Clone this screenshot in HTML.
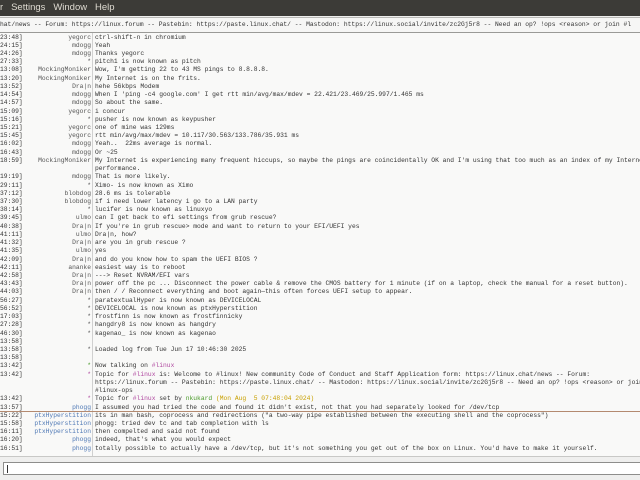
<!DOCTYPE html>
<html><head><meta charset="utf-8">
<style>
html,body{margin:0;padding:0;width:640px;height:480px;overflow:hidden;background:#efefee;font-family:"Liberation Sans",sans-serif;}
#menu{position:absolute;left:0;top:0;width:640px;height:16px;background:#3c3b37;color:#dfdbd2;font-size:9.5px;line-height:16px;white-space:pre;}
#topic{position:absolute;left:0;top:17px;width:640px;height:14px;background:#f6f6f5;border-top:1px solid #b9b9b6;border-bottom:1px solid #9a9a97;font-family:"Liberation Mono",monospace;font-size:6.3px;line-height:14px;color:#333;white-space:pre;overflow:hidden;}
#chat{position:absolute;left:0;top:33px;width:640px;height:423px;background:#f9f9f8;overflow:hidden;border-bottom:1px solid #c8c8c6;}
#sep{position:absolute;left:92px;top:0;width:1px;height:423px;background:#d0d0d0;}
.r{position:absolute;left:0;height:8.22px;width:640px;font-family:"Liberation Mono",monospace;font-size:6.3px;line-height:8.22px;white-space:pre;color:#333;}
.t{position:absolute;left:0;}
.n{position:absolute;right:549px;text-align:right;color:#555;}
.m{position:absolute;left:95px;}
.b{color:#4e78b5}
.g{color:#4a9a2a}
.p{color:#b04aa0}
.y{color:#c8a000}
#marker{position:absolute;left:0;top:377.5px;width:640px;height:1px;background:#b48a70;}
#input{position:absolute;left:3px;top:462px;width:640px;height:13px;background:#fff;border:1px solid #8e8e8c;box-sizing:border-box;}
#caret{position:absolute;left:3px;top:2px;width:1px;height:8px;background:#333;}
</style></head><body>
<div id="menu">r   Settings   Window   Help</div>
<div id="topic">hat/news -- Forum: https://linux.forum -- Pastebin: https://paste.linux.chat/ -- Mastodon: https://linux.social/invite/zc2Gj5r8 -- Need an op? !ops &lt;reason&gt; or join #l</div>
<div id="chat">
<div id="sep"></div>
<div class="r" style="top:0.6px"><span class="t">23:48]</span><span class="n">yegorc</span><span class="m">ctrl-shift-n in chromium</span></div>
<div class="r" style="top:8.82px"><span class="t">24:15]</span><span class="n">mdogg</span><span class="m">Yeah</span></div>
<div class="r" style="top:17.04px"><span class="t">24:26]</span><span class="n">mdogg</span><span class="m">Thanks yegorc</span></div>
<div class="r" style="top:25.26px"><span class="t">27:33]</span><span class="n">*</span><span class="m">pitch1 is now known as pitch</span></div>
<div class="r" style="top:33.48px"><span class="t">13:08]</span><span class="n">MockingMoniker</span><span class="m">Wow, I'm getting 22 to 43 MS pings to 8.8.8.8.</span></div>
<div class="r" style="top:41.7px"><span class="t">13:20]</span><span class="n">MockingMoniker</span><span class="m">My Internet is on the frits.</span></div>
<div class="r" style="top:49.92px"><span class="t">13:52]</span><span class="n">Dra|n</span><span class="m">hehe 56kbps Modem</span></div>
<div class="r" style="top:58.14px"><span class="t">14:54]</span><span class="n">mdogg</span><span class="m">When I 'ping -c4 google.com' I get rtt min/avg/max/mdev = 22.421/23.469/25.997/1.465 ms</span></div>
<div class="r" style="top:66.36px"><span class="t">14:57]</span><span class="n">mdogg</span><span class="m">So about the same.</span></div>
<div class="r" style="top:74.58px"><span class="t">15:09]</span><span class="n">yegorc</span><span class="m">i concur</span></div>
<div class="r" style="top:82.8px"><span class="t">15:16]</span><span class="n">*</span><span class="m">pusher is now known as keypusher</span></div>
<div class="r" style="top:91.02px"><span class="t">15:21]</span><span class="n">yegorc</span><span class="m">one of mine was 129ms</span></div>
<div class="r" style="top:99.24px"><span class="t">15:45]</span><span class="n">yegorc</span><span class="m">rtt min/avg/max/mdev = 10.117/30.563/133.786/35.931 ms</span></div>
<div class="r" style="top:107.46px"><span class="t">16:02]</span><span class="n">mdogg</span><span class="m">Yeah..  22ms average is normal.</span></div>
<div class="r" style="top:115.68px"><span class="t">16:43]</span><span class="n">mdogg</span><span class="m">Or ~25</span></div>
<div class="r" style="top:123.9px"><span class="t">18:59]</span><span class="n">MockingMoniker</span><span class="m">My Internet is experiencing many frequent hiccups, so maybe the pings are coincidentally OK and I'm using that too much as an index of my Internet</span></div>
<div class="r" style="top:132.12px"><span class="m">performance.</span></div>
<div class="r" style="top:140.34px"><span class="t">19:19]</span><span class="n">mdogg</span><span class="m">That is more likely.</span></div>
<div class="r" style="top:148.56px"><span class="t">29:11]</span><span class="n">*</span><span class="m">Ximo- is now known as Ximo</span></div>
<div class="r" style="top:156.78px"><span class="t">37:12]</span><span class="n">blobdog</span><span class="m">28.6 ms is tolerable</span></div>
<div class="r" style="top:165px"><span class="t">37:30]</span><span class="n">blobdog</span><span class="m">if i need lower latency i go to a LAN party</span></div>
<div class="r" style="top:173.22px"><span class="t">38:14]</span><span class="n">*</span><span class="m">lucifer is now known as linuxyo</span></div>
<div class="r" style="top:181.44px"><span class="t">39:45]</span><span class="n">ulmo</span><span class="m">can I get back to efi settings from grub rescue?</span></div>
<div class="r" style="top:189.66px"><span class="t">40:38]</span><span class="n">Dra|n</span><span class="m">If you're in grub rescue&gt; mode and want to return to your EFI/UEFI yes</span></div>
<div class="r" style="top:197.88px"><span class="t">41:11]</span><span class="n">ulmo</span><span class="m">Dra|n, how?</span></div>
<div class="r" style="top:206.1px"><span class="t">41:32]</span><span class="n">Dra|n</span><span class="m">are you in grub rescue ?</span></div>
<div class="r" style="top:214.32px"><span class="t">41:35]</span><span class="n">ulmo</span><span class="m">yes</span></div>
<div class="r" style="top:222.54px"><span class="t">42:09]</span><span class="n">Dra|n</span><span class="m">and do you know how to spam the UEFI BIOS ?</span></div>
<div class="r" style="top:230.76px"><span class="t">42:11]</span><span class="n">ananke</span><span class="m">easiest way is to reboot</span></div>
<div class="r" style="top:238.98px"><span class="t">42:58]</span><span class="n">Dra|n</span><span class="m">---&gt; Reset NVRAM/EFI vars</span></div>
<div class="r" style="top:247.2px"><span class="t">43:43]</span><span class="n">Dra|n</span><span class="m">power off the pc ... Disconnect the power cable &amp; remove the CMOS battery for 1 minute (if on a laptop, check the manual for a reset button).</span></div>
<div class="r" style="top:255.42px"><span class="t">44:03]</span><span class="n">Dra|n</span><span class="m">then / / Reconnect everything and boot again—this often forces UEFI setup to appear.</span></div>
<div class="r" style="top:263.64px"><span class="t">56:27]</span><span class="n">*</span><span class="m">paratextualHyper is now known as DEVICELOCAL</span></div>
<div class="r" style="top:271.86px"><span class="t">56:52]</span><span class="n">*</span><span class="m">DEVICELOCAL is now known as ptxHyperstition</span></div>
<div class="r" style="top:280.08px"><span class="t">17:03]</span><span class="n">*</span><span class="m">frostfinn is now known as frostfinnicky</span></div>
<div class="r" style="top:288.3px"><span class="t">27:28]</span><span class="n">*</span><span class="m">hangdry8 is now known as hangdry</span></div>
<div class="r" style="top:296.52px"><span class="t">46:30]</span><span class="n">*</span><span class="m">kagenao_ is now known as kagenao</span></div>
<div class="r" style="top:304.74px"><span class="t">13:58]</span></div>
<div class="r" style="top:312.96px"><span class="t">13:58]</span><span class="n">*</span><span class="m">Loaded log from Tue Jun 17 10:46:30 2025</span></div>
<div class="r" style="top:321.18px"><span class="t">13:58]</span></div>
<div class="r" style="top:329.4px"><span class="t">13:42]</span><span class="n g">*</span><span class="m">Now talking on <span class="p">#linux</span></span></div>
<div class="r" style="top:337.62px"><span class="t">13:42]</span><span class="n p">*</span><span class="m">Topic for <span class="p">#linux</span> is: Welcome to #linux! New community Code of Conduct and Staff Application form: https://linux.chat/news -- Forum:</span></div>
<div class="r" style="top:345.84px"><span class="m">https://linux.forum -- Pastebin: https://paste.linux.chat/ -- Mastodon: https://linux.social/invite/zc2Gj5r8 -- Need an op? !ops &lt;reason&gt; or join</span></div>
<div class="r" style="top:354.06px"><span class="m">#linux-ops</span></div>
<div class="r" style="top:362.28px"><span class="t">13:42]</span><span class="n p">*</span><span class="m">Topic for <span class="p">#linux</span> set by <span class="g">nkukard</span> <span class="y">(Mon Aug  5 07:48:04 2024)</span></span></div>
<div class="r" style="top:370.5px"><span class="t">13:57]</span><span class="n b">phogg</span><span class="m">I assumed you had tried the code and found it didn't exist, not that you had separately looked for /dev/tcp</span></div>
<div id="marker"></div>
<div class="r" style="top:378.72px"><span class="t">15:22]</span><span class="n b">ptxHyperstition</span><span class="m">its in man bash, coprocess and redirections ("a two-way pipe established between the executing shell and the coprocess")</span></div>
<div class="r" style="top:386.94px"><span class="t">15:58]</span><span class="n b">ptxHyperstition</span><span class="m">phogg: tried dev tc and tab completion with ls</span></div>
<div class="r" style="top:395.16px"><span class="t">16:11]</span><span class="n b">ptxHyperstition</span><span class="m">then compelted and said not found</span></div>
<div class="r" style="top:403.38px"><span class="t">16:20]</span><span class="n b">phogg</span><span class="m">indeed, that's what you would expect</span></div>
<div class="r" style="top:411.6px"><span class="t">16:51]</span><span class="n b">phogg</span><span class="m">totally possible to actually have a /dev/tcp, but it's not something you get out of the box on Linux. You'd have to make it yourself.</span></div>
</div>
<div id="input"><div id="caret"></div></div>
</body></html>
